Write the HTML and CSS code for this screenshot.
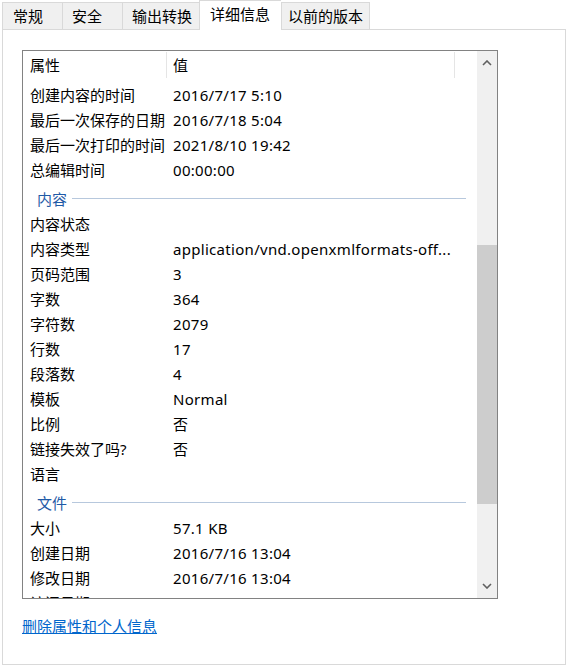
FILE: index.html
```html
<!DOCTYPE html>
<html lang="zh-CN">
<head>
    <meta charset="UTF-8">
    <meta name="viewport" content="width=device-width, initial-scale=1.0">
    <title>属性</title>
    <link rel="stylesheet" href="styles.css">
</head>
<body>
    <div class="dialog">
        <div class="tabs">
            <div class="tab tab-1">常规</div>
            <div class="tab tab-2">安全</div>
            <div class="tab tab-3">输出转换</div>
            <div class="tab tab-4 selected">详细信息</div>
            <div class="tab tab-5">以前的版本</div>
        </div>

        <div class="panel">
            <div class="listbox">
                <div class="list-body">
                    <div class="list-header">
                        <div class="head-cell head-prop">属性</div>
                        <div class="head-cell head-value">值</div>
                    </div>

                    <div class="rows">
                        <div class="row"><span>创建内容的时间</span><span class="val">2016/7/17 5:10</span></div>
                        <div class="row"><span>最后一次保存的日期</span><span class="val">2016/7/18 5:04</span></div>
                        <div class="row"><span>最后一次打印的时间</span><span class="val">2021/8/10 19:42</span></div>
                        <div class="row"><span>总编辑时间</span><span class="val">00:00:00</span></div>

                        <div class="group"><span class="group-label">内容</span><span class="group-line"></span></div>
                        <div class="row"><span>内容状态</span><span class="val"></span></div>
                        <div class="row"><span>内容类型</span><span class="val">application/vnd.openxmlformats-off...</span></div>
                        <div class="row"><span>页码范围</span><span class="val">3</span></div>
                        <div class="row"><span>字数</span><span class="val">364</span></div>
                        <div class="row"><span>字符数</span><span class="val">2079</span></div>
                        <div class="row"><span>行数</span><span class="val">17</span></div>
                        <div class="row"><span>段落数</span><span class="val">4</span></div>
                        <div class="row"><span>模板</span><span class="val">Normal</span></div>
                        <div class="row"><span>比例</span><span class="val">否</span></div>
                        <div class="row"><span>链接失效了吗?</span><span class="val">否</span></div>
                        <div class="row"><span>语言</span><span class="val"></span></div>

                        <div class="group"><span class="group-label">文件</span><span class="group-line"></span></div>
                        <div class="row"><span>大小</span><span class="val">57.1 KB</span></div>
                        <div class="row"><span>创建日期</span><span class="val">2016/7/16 13:04</span></div>
                        <div class="row"><span>修改日期</span><span class="val">2016/7/16 13:04</span></div>
                        <div class="row"><span>访问日期</span><span class="val">2021/8/10 19:42</span></div>
                    </div>
                </div>

                <div class="scrollbar">
                    <div class="scroll-btn">
                        <svg width="10" height="6" viewBox="0 0 10 6"><path d="M1 5 L5 1 L9 5" fill="none" stroke="#606060" stroke-width="1.6"/></svg>
                    </div>
                    <div class="scroll-track">
                        <div class="scroll-thumb"></div>
                    </div>
                    <div class="scroll-btn">
                        <svg width="10" height="6" viewBox="0 0 10 6"><path d="M1 1 L5 5 L9 1" fill="none" stroke="#606060" stroke-width="1.6"/></svg>
                    </div>
                </div>
            </div>

            <a class="remove-link" href="#">删除属性和个人信息</a>
        </div>
    </div>
</body>
</html>
```

FILE: styles.css
```css
* {
    box-sizing: border-box;
}
body {
    margin: 0;
    background: #fff;
    font-family: "Noto Sans", "Noto Sans CJK SC", sans-serif;
    font-size: 15px;
    color: #000;
}
.dialog {
    width: 568px;
    padding: 0 2px;
}

/* tab strip */
.tabs {
    display: flex;
    align-items: flex-end;
    height: 29px;
}
.tab {
    height: 27px;
    padding-top: 3px;
    line-height: 20px;
    background: #f0f0f0;
    border: 1px solid #d9d9d9;
    border-bottom: none;
    border-right: none;
    white-space: nowrap;
}
.tab-1 { width: 60px; padding-left: 10px; }
.tab-2 { width: 60px; padding-left: 9px; }
.tab-3 { width: 77px; padding-left: 9px; }
.tab-4 { width: 82px; padding-left: 10px; }
.tab-5 { width: 89px; padding-left: 6px; border-right: 1px solid #d9d9d9; }
.tab.selected {
    height: 30px;
    margin-bottom: -1px;
    padding-top: 3px;
    background: #fff;
}

/* page body */
.panel {
    height: 636px;
    border: 1px solid #d9d9d9;
    padding: 20px 0 0 19px;
    background: #fff;
}
.listbox {
    display: flex;
    width: 476px;
    height: 549px;
    border: 1px solid #828282;
    background: #fff;
}
.list-body {
    flex: 1;
    overflow: hidden;
}
.list-header {
    display: flex;
    height: 28px;
    padding-top: 1px;
}
.head-cell {
    height: 26px;
    line-height: 26px;
    border-right: 1px solid #e5e5e5;
}
.head-prop {
    width: 144px;
    padding-left: 7px;
}
.head-value {
    width: 288px;
    padding-left: 6px;
}
.rows {
    padding-top: 4px;
}
.row {
    display: grid;
    grid-template-columns: 143px 1fr;
    height: 25px;
    line-height: 25px;
    padding-left: 7px;
    white-space: nowrap;
}
.val {
    letter-spacing: 0.3px;
}
.group {
    display: flex;
    align-items: center;
    height: 29px;
    padding: 2px 11px 0 14px;
}
.group-label {
    color: #1f5aa6;
    line-height: 20px;
}
.group-line {
    flex: 1;
    height: 1px;
    margin-left: 5px;
    background: #b7c8dd;
}

/* scroll bar */
.scrollbar {
    display: flex;
    flex-direction: column;
    width: 20px;
    background: #f0f0f0;
}
.scroll-btn {
    display: flex;
    align-items: center;
    justify-content: center;
    height: 24px;
}
.scroll-track {
    flex: 1;
}
.scroll-thumb {
    height: 259px;
    margin-top: 170px;
    background: #cdcdcd;
}

.remove-link {
    display: inline-block;
    margin-top: 17px;
    line-height: 20px;
    color: #0066cc;
    text-decoration: underline;
}
```
